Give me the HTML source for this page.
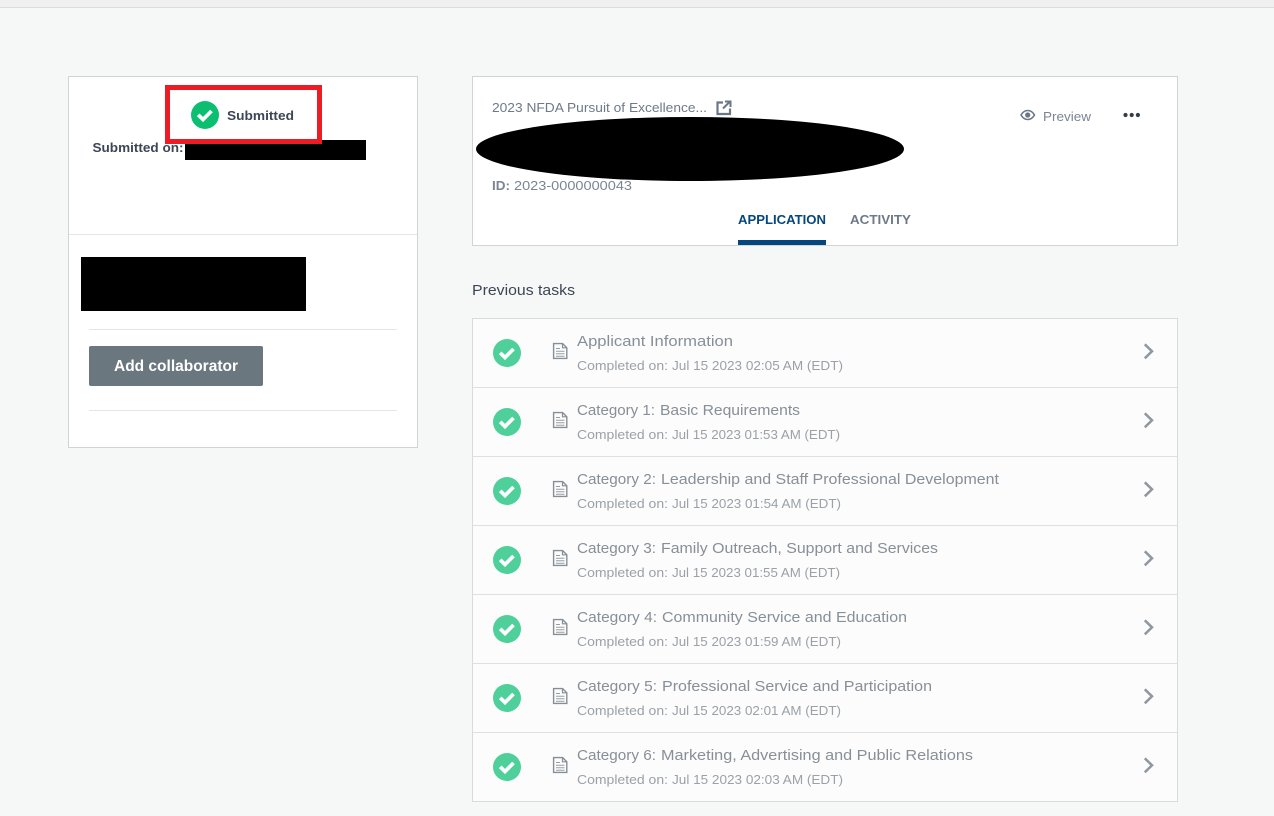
<!DOCTYPE html>
<html><head><meta charset="utf-8"><title>Application</title>
<style>
html,body{margin:0;padding:0;background:#f6f8f7;width:1274px;height:816px;overflow:hidden}
svg{display:block}
text{font-family:"Liberation Sans",sans-serif;white-space:pre}
.r{shape-rendering:crispEdges}
.t{font-size:14.5px;fill:#878f97}
.s{font-size:13px;fill:#9ba1a7}
</style></head><body>
<svg xmlns="http://www.w3.org/2000/svg" width="1274" height="816" viewBox="0 0 1274 816">
<defs>
<g id="row">
<circle cx="507" cy="353" r="14" fill="#4fd09b"/>
<path d="M500.200 352.800l4.800 4.700 8.500-8.500" fill="none" stroke="#fff" stroke-width="3.700"/>
<path d="M553.600 343.600h9l4.200 4.200v10.600h-13.200z" fill="none" stroke="#868e96" stroke-width="1.400"/>
<path d="M562.500 343.600v4.200h4.200" fill="none" stroke="#868e96" stroke-width="1.200"/>
<path d="M556 348.500h4M556 351.200h8.500M556 353.700h8.500M556 356.200h8.500" stroke="#979da4" stroke-width="1"/>
<path d="M1144.800 344.300l7.200 7-7.200 7" fill="none" stroke="#8f979f" stroke-width="2.500"/>
</g>
</defs>
<rect class="r" width="1274" height="816" fill="#f6f8f7"/>
<rect class="r" width="1274" height="7" fill="#f0f0f0"/>
<rect class="r" y="7" width="1274" height="1" fill="#dcdcdc"/>

<rect class="r" x="68.500" y="76.500" width="349" height="371" fill="#fff" stroke="#d2d4d4"/>
<rect class="r" x="69" y="234" width="348" height="1" fill="#e4e5e5"/>
<rect class="r" x="185" y="140" width="181" height="20" fill="#000"/>
<rect class="r" x="167.500" y="87.500" width="152" height="54" fill="#fff" stroke="#ed1c24" stroke-width="5"/>
<circle cx="205" cy="115" r="14" fill="#0cbf70"/>
<path d="M198.200 114.800l4.800 4.700 8.500-8.500" fill="none" stroke="#fff" stroke-width="3.700"/>
<text x="227" y="120" font-size="13" font-weight="700" fill="#3e4656" textLength="67" lengthAdjust="spacingAndGlyphs">Submitted</text>
<text x="92.500" y="152" font-size="13" font-weight="700" fill="#3e4656" textLength="91" lengthAdjust="spacingAndGlyphs">Submitted on:</text>
<rect class="r" x="81" y="257" width="225" height="54" fill="#000"/>
<rect class="r" x="89" y="329" width="308" height="1" fill="#e4e5e5"/>
<rect x="89" y="346" width="174" height="40" rx="2" fill="#6b777f"/>
<text x="114" y="371" font-size="16" font-weight="700" fill="#fff" textLength="124" lengthAdjust="spacingAndGlyphs">Add collaborator</text>
<rect class="r" x="89" y="410" width="308" height="1" fill="#e4e5e5"/>

<rect class="r" x="472.500" y="76.500" width="705" height="169" fill="#fff" stroke="#d2d4d4"/>
<text x="492" y="112" font-size="13" fill="#6f7a88" textLength="215" lengthAdjust="spacingAndGlyphs">2023 NFDA Pursuit of Excellence...</text>
<path d="M723 102.500h-5.500v11.500h12.500v-5.500" fill="none" stroke="#6b7787" stroke-width="2.200"/>
<path d="M723 108.500l7-7M725 101.500h5.500v5.500" fill="none" stroke="#6b7787" stroke-width="2"/>
<ellipse cx="690" cy="149" rx="214" ry="32" fill="#000"/>
<text x="492" y="190" font-size="13" font-weight="700" fill="#7b8592" textLength="18" lengthAdjust="spacingAndGlyphs">ID:</text>
<text x="514" y="190" font-size="13" fill="#7b8592" textLength="118" lengthAdjust="spacingAndGlyphs">2023-0000000043</text>
<text x="738" y="224" font-size="13" font-weight="700" fill="#05467e" textLength="88" lengthAdjust="spacingAndGlyphs">APPLICATION</text>
<rect class="r" x="738" y="240" width="88" height="5" fill="#05467e"/>
<text x="850" y="224" font-size="13" font-weight="700" fill="#6f7a88" textLength="61" lengthAdjust="spacingAndGlyphs">ACTIVITY</text>
<path d="M1021 115c3.500-6 10-6 13.500 0-3.500 6-10 6-13.500 0z" fill="none" stroke="#6b7787" stroke-width="1.600"/>
<circle cx="1027.700" cy="115" r="2.600" fill="#6b7787"/>
<text x="1043" y="121" font-size="13" fill="#7b8592" textLength="48" lengthAdjust="spacingAndGlyphs">Preview</text>
<circle cx="1125.500" cy="115" r="2.100" fill="#333e48"/><circle cx="1131.700" cy="115" r="2.100" fill="#333e48"/><circle cx="1137.900" cy="115" r="2.100" fill="#333e48"/>

<text x="472" y="295" font-size="15" fill="#3e4656" textLength="103" lengthAdjust="spacingAndGlyphs">Previous tasks</text>

<rect class="r" x="472.500" y="318.500" width="705" height="483" fill="#fcfcfc" stroke="#d9dbdb"/>
<rect class="r" x="473" y="387" width="704" height="1" fill="#dfe0e0"/>
<rect class="r" x="473" y="456" width="704" height="1" fill="#dfe0e0"/>
<rect class="r" x="473" y="525" width="704" height="1" fill="#dfe0e0"/>
<rect class="r" x="473" y="594" width="704" height="1" fill="#dfe0e0"/>
<rect class="r" x="473" y="663" width="704" height="1" fill="#dfe0e0"/>
<rect class="r" x="473" y="732" width="704" height="1" fill="#dfe0e0"/>

<use href="#row"/>
<use href="#row" y="69"/>
<use href="#row" y="138"/>
<use href="#row" y="207"/>
<use href="#row" y="276"/>
<use href="#row" y="345"/>
<use href="#row" y="414"/>

<text class="t" x="577" y="346" textLength="156" lengthAdjust="spacingAndGlyphs">Applicant Information</text>
<text class="s" x="577" y="370" textLength="91" lengthAdjust="spacingAndGlyphs">Completed on:</text>
<text class="s" x="672" y="370" textLength="171" lengthAdjust="spacingAndGlyphs">Jul 15 2023 02:05 AM (EDT)</text>

<text class="t" x="577" y="415" textLength="78" lengthAdjust="spacingAndGlyphs">Category 1:</text>
<text class="t" x="660" y="415" textLength="140" lengthAdjust="spacingAndGlyphs">Basic Requirements</text>
<text class="s" x="577" y="439" textLength="91" lengthAdjust="spacingAndGlyphs">Completed on:</text>
<text class="s" x="672" y="439" textLength="168" lengthAdjust="spacingAndGlyphs">Jul 15 2023 01:53 AM (EDT)</text>

<text class="t" x="577" y="484" textLength="79" lengthAdjust="spacingAndGlyphs">Category 2:</text>
<text class="t" x="661" y="484" textLength="338" lengthAdjust="spacingAndGlyphs">Leadership and Staff Professional Development</text>
<text class="s" x="577" y="508" textLength="91" lengthAdjust="spacingAndGlyphs">Completed on:</text>
<text class="s" x="672" y="508" textLength="169" lengthAdjust="spacingAndGlyphs">Jul 15 2023 01:54 AM (EDT)</text>

<text class="t" x="577" y="553" textLength="79" lengthAdjust="spacingAndGlyphs">Category 3:</text>
<text class="t" x="661" y="553" textLength="277" lengthAdjust="spacingAndGlyphs">Family Outreach, Support and Services</text>
<text class="s" x="577" y="577" textLength="91" lengthAdjust="spacingAndGlyphs">Completed on:</text>
<text class="s" x="672" y="577" textLength="168" lengthAdjust="spacingAndGlyphs">Jul 15 2023 01:55 AM (EDT)</text>

<text class="t" x="577" y="622" textLength="80" lengthAdjust="spacingAndGlyphs">Category 4:</text>
<text class="t" x="662" y="622" textLength="245" lengthAdjust="spacingAndGlyphs">Community Service and Education</text>
<text class="s" x="577" y="646" textLength="91" lengthAdjust="spacingAndGlyphs">Completed on:</text>
<text class="s" x="672" y="646" textLength="169" lengthAdjust="spacingAndGlyphs">Jul 15 2023 01:59 AM (EDT)</text>

<text class="t" x="577" y="691" textLength="80" lengthAdjust="spacingAndGlyphs">Category 5:</text>
<text class="t" x="662" y="691" textLength="270" lengthAdjust="spacingAndGlyphs">Professional Service and Participation</text>
<text class="s" x="577" y="715" textLength="91" lengthAdjust="spacingAndGlyphs">Completed on:</text>
<text class="s" x="672" y="715" textLength="169" lengthAdjust="spacingAndGlyphs">Jul 15 2023 02:01 AM (EDT)</text>

<text class="t" x="577" y="760" textLength="79" lengthAdjust="spacingAndGlyphs">Category 6:</text>
<text class="t" x="661" y="760" textLength="312" lengthAdjust="spacingAndGlyphs">Marketing, Advertising and Public Relations</text>
<text class="s" x="577" y="784" textLength="91" lengthAdjust="spacingAndGlyphs">Completed on:</text>
<text class="s" x="672" y="784" textLength="171" lengthAdjust="spacingAndGlyphs">Jul 15 2023 02:03 AM (EDT)</text>
</svg>
</body></html>
